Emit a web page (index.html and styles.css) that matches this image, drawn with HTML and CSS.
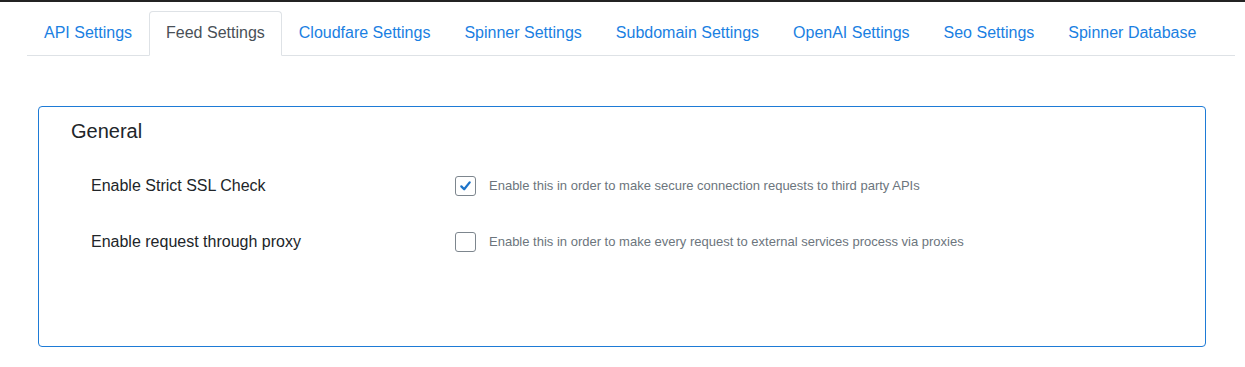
FILE: index.html
```html
<!DOCTYPE html>
<html lang="en">
<head>
<meta charset="utf-8">
<title>Feed Settings</title>
<link rel="stylesheet" href="styles.css">
</head>
<body>
<div class="topbar"></div>
<ul class="tabs">
  <li><a class="tab" href="#">API Settings</a></li>
  <li><a class="tab active" href="#">Feed Settings</a></li>
  <li><a class="tab" href="#">Cloudfare Settings</a></li>
  <li><a class="tab" href="#">Spinner Settings</a></li>
  <li><a class="tab" href="#">Subdomain Settings</a></li>
  <li><a class="tab" href="#">OpenAI Settings</a></li>
  <li><a class="tab" href="#">Seo Settings</a></li>
  <li><a class="tab" href="#">Spinner Database</a></li>
</ul>
<section class="card">
  <h2 class="card-title">General</h2>
  <div class="row">
    <label class="row-label">Enable Strict SSL Check</label>
    <div class="row-control">
      <span class="check checked">
        <svg viewBox="0 0 20 20" width="20" height="20" aria-hidden="true"><path d="M5.6 10.4 L8.6 13.4 L14.4 6.2" fill="none" stroke="#1d74c9" stroke-width="2.4" stroke-linecap="round" stroke-linejoin="round"/></svg>
      </span>
      <span class="help">Enable this in order to make secure connection requests to third party APIs</span>
    </div>
  </div>
  <div class="row">
    <label class="row-label">Enable request through proxy</label>
    <div class="row-control">
      <span class="check"></span>
      <span class="help">Enable this in order to make every request to external services process via proxies</span>
    </div>
  </div>
</section>
</body>
</html>
```
FILE: styles.css
```css
* { box-sizing: border-box; }
html, body { margin: 0; padding: 0; background: #fff; }
body {
  font-family: "Liberation Sans", Arial, sans-serif;
  font-size: 16px;
  line-height: 24px;
  color: #212529;
}
.topbar { height: 2px; background: #232323; }
.tabs {
  display: flex;
  list-style: none;
  margin: 9px 10px 0 27px;
  padding: 0;
  border-bottom: 1px solid #dee2e6;
}
.tab {
  display: block;
  padding: 9px 16px 10px;
  margin-bottom: -1px;
  border: 1px solid transparent;
  border-top-left-radius: 4px;
  border-top-right-radius: 4px;
  color: #1a80e2;
  text-decoration: none;
  font-size: 16px;
  line-height: 24px;
}
.tab.active {
  color: #495057;
  background: #fff;
  border-color: #dee2e6 #dee2e6 #fff;
}
.card {
  margin: 50px 39px 0 38px;
  border: 1px solid #1e7bd6;
  border-radius: 4px;
  padding: 12px 32px 76px;
}
.card-title {
  margin: 0 0 15px;
  font-size: 20px;
  line-height: 24px;
  font-weight: 400;
  color: #212529;
}
.row {
  display: flex;
  align-items: center;
  padding: 16px 0 16px 20px;
}
.row-label {
  width: 364px;
  flex: none;
  font-size: 16px;
  line-height: 24px;
  color: #212529;
}
.row-control {
  display: flex;
  align-items: center;
}
.check {
  width: 21px;
  height: 20px;
  flex: none;
  border: 1px solid #7d868e;
  border-radius: 3px;
  margin-right: 13px;
  display: flex;
  align-items: center;
  justify-content: center;
  background: #fff;
}
.check svg { display: block; }
.help {
  font-size: 13px;
  line-height: 20px;
  color: #6c757d;
}
```
